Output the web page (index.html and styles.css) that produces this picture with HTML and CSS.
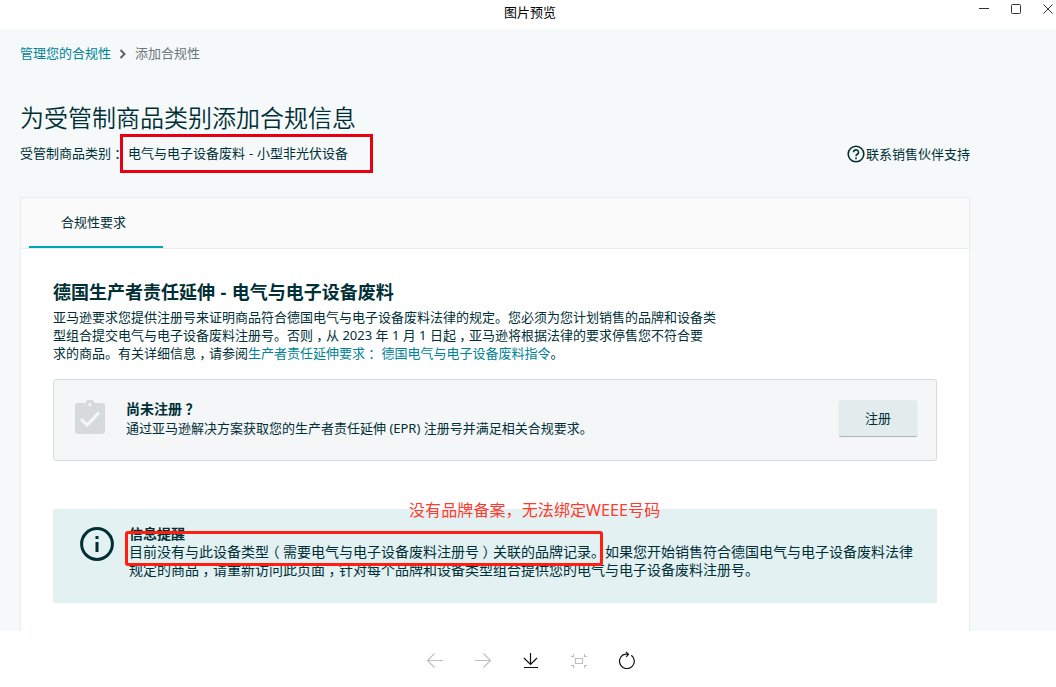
FILE: index.html
```
<!DOCTYPE html>
<html lang="zh-CN">
<head>
    <meta charset="UTF-8">
    <meta name="viewport" content="width=device-width, initial-scale=1.0">
    <title>图片预览</title>
    <link rel="stylesheet" href="styles.css">
</head>
<body>
    <header class="titlebar">
        <span class="titlebar-text">图片预览</span>
        <div class="win-btns">
            <svg width="10" height="10" viewBox="0 0 10 10"><path d="M0 4.5h10"/></svg>
            <svg width="10" height="10" viewBox="0 0 10 10"><rect x="0.5" y="0.5" width="9" height="9" rx="1"/></svg>
            <svg width="10" height="10" viewBox="0 0 10 10"><path d="M0.5 0.5l9 9M9.5 0.5l-9 9"/></svg>
        </div>
    </header>

    <main class="page">
        <div class="breadcrumb">
            <a class="link">管理您的合规性</a>
            <svg width="8" height="10" viewBox="0 0 8 10"><path d="M1.5 1l4 4-4 4"/></svg>
            <span>添加合规性</span>
        </div>
        <h1>为受管制商品类别添加合规信息</h1>
        <div class="category">
            <span class="category-label">受管制商品类别<span class="mark">：</span></span>
            <span class="category-value">电气与电子设备废料 - 小型非光伏设备</span>
            <div class="support">
                <svg width="18" height="18" viewBox="0 0 18 18">
                    <circle cx="9" cy="9" r="7.8"/>
                    <path d="M6.5 7.3a2.5 2.4 0 1 1 3.8 2Q9 10.1 9 11.2"/>
                    <path d="M9 12.6v1.6"/>
                </svg>
                <span>联系销售伙伴支持</span>
            </div>
        </div>

        <section class="card">
            <div class="tabs">
                <div class="tab active">合规性要求</div>
            </div>
            <div class="card-body">
                <h2>德国生产者责任延伸 - 电气与电子设备废料</h2>
                <p class="desc">亚马逊要求您提供注册号来证明商品符合德国电气与电子设备废料法律的规定。您必须为您计划销售的品牌和设备类<br>型组合提交电气与电子设备废料注册号。否则<span class="mark">，</span>从 2023 年 1 月 1 日起<span class="mark">，</span>亚马逊将根据法律的要求停售您不符合要<br>求的商品。有关详细信息<span class="mark">，</span>请参阅<a class="link">生产者责任延伸要求<span class="mark">：</span> 德国电气与电子设备废料指令</a>。</p>

                <div class="register">
                    <svg class="clipboard" width="30" height="34" viewBox="0 0 30 34">
                        <path class="board" fill-rule="evenodd" d="M3 3h7.5a4.6 4.6 0 0 1 9 0H27a3 3 0 0 1 3 3v25a3 3 0 0 1-3 3H3a3 3 0 0 1-3-3V6a3 3 0 0 1 3-3zM15 3a1.6 1.6 0 1 0 0 3.200a1.600 1.600 0 1 0 0-3.200z"/>
                        <path class="tick" d="M6 19l6 6L24 12.500"/>
                    </svg>
                    <div class="register-text">
                        <h3>尚未注册<span class="mark">？</span></h3>
                        <p>通过亚马逊解决方案获取您的生产者责任延伸 (EPR) 注册号并满足相关合规要求。</p>
                    </div>
                    <button class="btn">注册</button>
                </div>

                <div class="notice">
                    <svg width="34" height="34" viewBox="0 0 34 34">
                        <circle cx="17" cy="17" r="15.400"/>
                        <path d="M17 9v3M17 15v10"/>
                    </svg>
                    <div class="notice-text">
                        <h3>信息提醒</h3>
                        <p>目前没有与此设备类型<span class="mark">（</span>需要电气与电子设备废料注册号<span class="mark">）</span>关联的品牌记录。如果您开始销售符合德国电气与电子设备废料法律<br>规定的商品<span class="mark">，</span>请重新访问此页面<span class="mark">，</span>针对每个品牌和设备类型组合提供您的电气与电子设备废料注册号。</p>
                    </div>
                    <div class="note-label">没有品牌备案，无法绑定WEEE号码</div>
                    <div class="note-frame"></div>
                </div>
            </div>
        </section>
    </main>

    <footer class="toolbar">
        <svg class="off" width="18" height="18" viewBox="0 0 18 18"><path d="M17 9.500H1.500M8.500 2.500l-7 7 7 7"/></svg>
        <svg class="off" width="18" height="18" viewBox="0 0 18 18"><path d="M1 9.500h15.500M9.500 2.500l7 7-7 7"/></svg>
        <svg width="18" height="18" viewBox="0 0 18 18"><path d="M8.500 2v11.500M2 7l6.500 6.500L15 7M2 16.500h14"/></svg>
        <svg class="off" width="18" height="18" viewBox="0 0 18 18"><path d="M5.500 7.500h7v5h-7zM1 5.500h2.500V3M17 5.500h-2.500V3M1 14.500h2.500V17M17 14.500h-2.500V17"/></svg>
        <svg width="18" height="18" viewBox="0 0 18 18"><path d="M13.300 4.200a7.400 7.400 0 1 1-7.800-.6Q7.500 2.900 10.300 3.200M7.800 1l2.700 2.300L8.200 5.800"/></svg>
    </footer>
</body>
</html>
```
FILE: styles.css
```
*{
    margin: 0;
    padding: 0;
    box-sizing: border-box;
}
body {
    width: 1056px;
    height: 687px;
    overflow: hidden;
    display: flex;
    flex-direction: column;
    background-color: #fff;
    color: #002f36;
    font-family: "Noto Sans", "Noto Sans CJK SC", sans-serif;
    font-size: 13px;
    line-height: 18px;
    white-space: nowrap;
}
svg {
    display: block;
    flex: none;
    fill: none;
    stroke: #002f36;
}
.titlebar {
    position: relative;
    height: 29px;
    flex: none;
    display: flex;
    justify-content: center;
    padding: 3px 0 0 4px;
    color: #000;
}
.win-btns {
    position: absolute;
    top: 4px;
    right: 3px;
    display: flex;
    gap: 22px;
}
.win-btns svg {
    stroke: #333;
}
.page {
    height: 602px;
    flex: none;
    overflow: hidden;
    padding: 15px 86px 0 20px;
    background-color: #f5f9fa;
}
.link {
    color: #008296;
}
.breadcrumb {
    display: flex;
    align-items: center;
    gap: 8px;
    color: #6c7778;
}
.breadcrumb svg {
    margin-top: 2px;
    stroke: #5a6566;
    stroke-width: 2;
}
h1 {
    margin-top: 40px;
    font-size: 24px;
    line-height: 32px;
    font-weight: 350;
}
/* half-width glyph, padded back to a full cell so it sits in the middle */
.mark {
    padding: 0 0.25em;
    font-family: "Noto Sans CJK SC", sans-serif;
    font-feature-settings: "halt";
    line-height: 0;
}
.category {
    display: flex;
    align-items: center;
    height: 39px;
}
.category-label {
    width: 100px;
    padding-bottom: 1px;
}
.category-value {
    width: 253px;
    height: 39px;
    padding-left: 5px;
    border: 3px solid #e60012;
    line-height: 33px;
    word-spacing: 0.5px;
}
.support {
    margin-left: auto;
    display: flex;
    align-items: center;
    gap: 1px;
}
.support svg {
    stroke-width: 1.6;
}
.card {
    height: 500px;
    margin-top: 24px;
    border: 1px solid #e9eded;
    background-color: #fff;
}
.tabs {
    display: flex;
    height: 51px;
    padding-left: 8px;
    border-bottom: 1px solid #eaeded;
    background-color: #fafafa;
}
.tab {
    width: 134px;
    padding: 15px 0 0 32px;
}
.tab.active {
    border-bottom: 2px solid #00a4b4;
}
.card-body {
    padding: 31px 32px 0;
}
h2 {
    font-size: 18px;
    line-height: 24px;
    font-weight: 700;
    word-spacing: 0.8px;
}
.desc {
    margin-top: 4px;
}
.register {
    display: flex;
    align-items: flex-start;
    height: 82px;
    margin-top: 17px;
    padding: 20px 19px 0 21px;
    border: 1px solid #d5dbdb;
    border-radius: 3px;
    background-color: #f4f6f8;
}
.clipboard .board {
    fill: #d5dbdb;
    stroke: none;
}
.clipboard .tick {
    stroke: #f4f6f8;
    stroke-width: 3;
}
.register-text {
    margin-left: 21px;
}
.register-text p {
    margin-top: 1px;
}
h3 {
    font-size: 14px;
    line-height: 18px;
    font-weight: 700;
}
.btn {
    width: 78px;
    height: 36px;
    margin-left: auto;
    padding-bottom: 1px;
    border: none;
    border-radius: 2px;
    background-color: #e3eced;
    box-shadow: 0 1px 1px rgba(0, 0, 0, 0.3);
    color: #002f36;
    font: inherit;
}
.notice {
    position: relative;
    display: flex;
    height: 94px;
    margin-top: 48px;
    padding: 16px 0 0 27px;
    background-color: #e3f1f2;
    font-size: 14px;
}
.notice svg {
    margin-top: 2px;
    stroke-width: 3;
}
.notice-text {
    margin-left: 15px;
}
/* red annotations drawn over the notice */
.note-label {
    position: absolute;
    left: 356px;
    top: -9px;
    color: #ff3b30;
    font-size: 16px;
    line-height: 20px;
    letter-spacing: 0.1px;
}
.note-frame {
    position: absolute;
    left: 72px;
    top: 22px;
    width: 478px;
    height: 35px;
    border: 3px solid #ff1e10;
    border-radius: 3px;
}
.toolbar {
    height: 56px;
    display: flex;
    justify-content: center;
    gap: 30px;
    padding-top: 20px;
    padding-left: 6px;
}
.toolbar svg {
    stroke: #111;
    stroke-width: 1.2;
}
.toolbar .off {
    stroke: #bcc0c4;
}
```
